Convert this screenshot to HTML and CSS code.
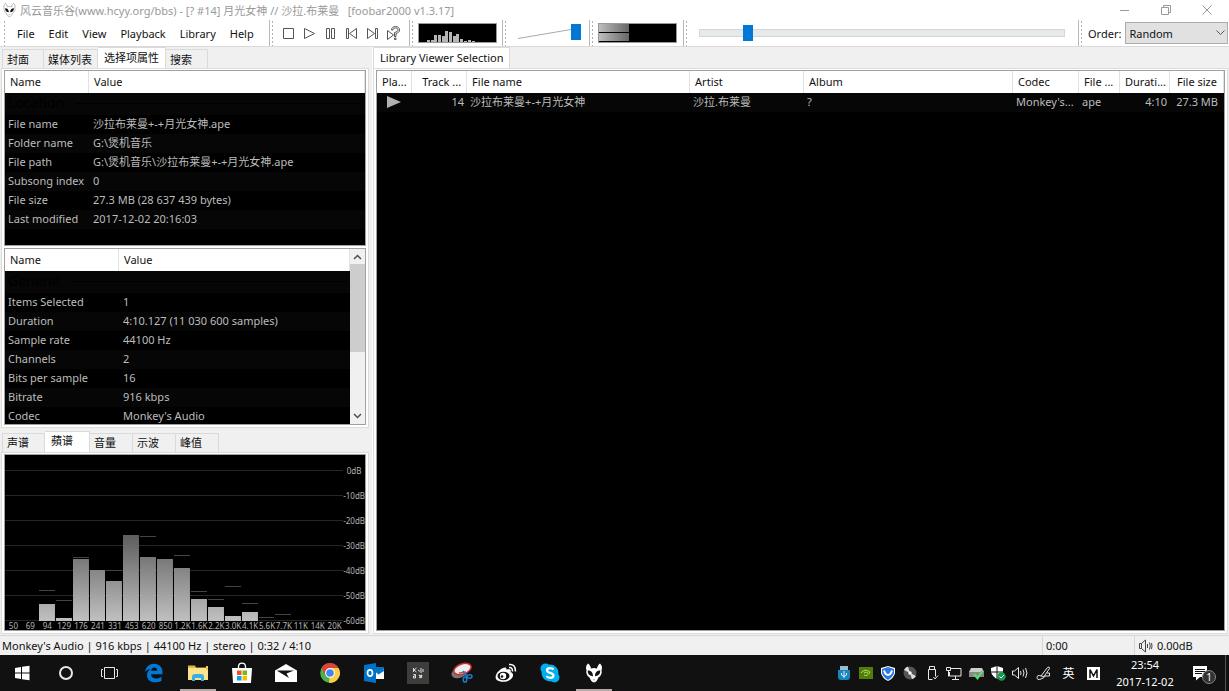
FILE: index.html
```
<!DOCTYPE html>
<html lang="zh-CN">
<head>
<meta charset="utf-8">
<title>foobar2000</title>
<link rel="stylesheet" href="styles.css">
</head>
<body>
<svg class="defs" aria-hidden="true">
  <symbol id="fox" viewBox="0 0 18 20">
    <path d="M3 .5C1 2.500.5 5 1.500 7.200.8 9.500 1.500 12.500 4.500 14.500 5.500 17 7 19.500 9 19.500s3.500-2.500 4.500-5c3-2 3.700-5 3-7.300C17.500 5 17 2.500 15 .5 13.500 1.500 12.500 3 12 5.500 10.500 4.700 7.500 4.700 6 5.500 5.500 3 4.500 1.500 3 .5z" fill="#fff" stroke="var(--edge, none)" stroke-width="1"/>
    <path d="M2.800 7.500C5.800 7.300 8 9.500 8 13.200 5 13.200 2.600 11.200 2.800 7.500zM15.200 7.500C12.200 7.300 10 9.500 10 13.200 13 13.200 15.400 11.200 15.200 7.500zM7.800 16.500h.8v1zM10.200 16.500h-.8v1z" fill="#111"/>
  </symbol>
</svg>

<header class="titlebar">
  <svg class="app-icon" width="13" height="14"><use href="#fox"/></svg>
  <h1 class="window-title">风云音乐谷(www.hcyy.org/bbs) - [? #14] 月光女神 // 沙拉.布莱曼 &nbsp; [foobar2000 v1.3.17]</h1>
  <button class="win-btn" aria-label="Minimize"><svg width="10" height="10"><path d="M0 5.500h9" stroke="#999"/></svg></button>
  <button class="win-btn" aria-label="Restore"><svg width="10" height="10" fill="none" stroke="#999"><path d="M.5 2.500h7v7h-7zM2.500 2.500v-2h7v7h-2"/></svg></button>
  <button class="win-btn" aria-label="Close"><svg width="10" height="10"><path d="M.5.5l9 9M9.500.5l-9 9" stroke="#999"/></svg></button>
</header>

<div class="toolbar">
  <nav class="band band-menu" aria-label="Menu">
    <button class="menu-item">File</button><button class="menu-item">Edit</button><button class="menu-item">View</button><button class="menu-item">Playback</button><button class="menu-item">Library</button><button class="menu-item">Help</button>
  </nav>
  <div class="band band-transport">
    <button class="tool" aria-label="Stop"><svg width="13" height="13"><path d="M1.500 1.500h10v10h-10z"/></svg></button>
    <button class="tool" aria-label="Play"><svg width="13" height="13"><path d="M1.500 1.500v10l10-5z"/></svg></button>
    <button class="tool" aria-label="Pause"><svg width="13" height="13"><path d="M2.500 1.500h3v10h-3zM7.500 1.500h3v10h-3z"/></svg></button>
    <button class="tool" aria-label="Previous"><svg width="13" height="13"><path d="M1.500 1.500h2v10h-2zM11.500 1.500v10l-7-5z"/></svg></button>
    <button class="tool" aria-label="Next"><svg width="13" height="13"><path d="M9.500 1.500h2v10h-2zM1.500 1.500v10l7-5z"/></svg></button>
    <button class="tool" aria-label="Random"><svg width="15" height="15"><path d="M1.500 4.500v9l6-4.500zM8.500 10.500h1.500v-3c2-.5 3.500-1.500 3.500-3.500S12 .5 9.500.5 5.500 2 5.500 4H7c0-1.300 1-2 2.500-2s2.500.8 2.500 2-1.500 2-3.500 2.500zM8.500 12h1.500v1.500H8.500z"/></svg></button>
  </div>
  <div class="band band-spectrum">
    <svg class="meter" width="79" height="20"><path fill="#000" stroke="#999" d="M.5.5h78v19H.5z"/><g fill="#b5b5b5"><path d="M9 17h3v2H9zM13 17h3v2h-3zM16 12h3v7h-3zM20 12h3v7h-3zM24 13h3v6h-3zM27 8h3v11h-3zM31 9h3v10h-3zM35 13h3v6h-3zM38 11h3v8h-3zM42 16h3v3h-3zM46 18h3v1h-3zM50 17h3v2h-3zM54 18h3v1h-3z"/></g></svg>
  </div>
  <div class="band band-volume">
    <div class="volume">
      <svg class="volume-ramp" viewBox="0 0 62 18" width="62" height="18"><path d="M0 14.500L53 5.500" stroke="#aaa" fill="none"/></svg>
      <input class="slider slider-volume" type="range" aria-label="Volume" min="0" max="100" value="100">
    </div>
  </div>
  <div class="band band-peak">
    <svg class="meter" width="79" height="20"><defs><linearGradient id="pk"><stop offset="0" stop-color="#bdbdbd"/><stop offset="1" stop-color="#666"/></linearGradient></defs><path fill="#000" stroke="#999" d="M.5.5h78v19H.5z"/><path fill="url(#pk)" d="M1 1h30v8H1zM1 10h30v8H1z"/></svg>
  </div>
  <div class="band band-seek">
    <input class="slider slider-seek" type="range" aria-label="Seek" min="0" max="1000" value="121">
  </div>
  <div class="band band-order">
    <label for="order">Order:</label>
    <div class="order-box">
      <select id="order" class="order-select"><option>Random</option></select>
      <svg class="order-arrow" width="9" height="6"><path d="M.5.5l4 4 4-4" fill="none" stroke="#555"/></svg>
    </div>
  </div>
</div>

<main class="workspace">
  <section class="left">
    <div class="tabs" role="tablist">
      <button class="tab" role="tab">封面</button><button class="tab" role="tab">媒体列表</button><button class="tab active" role="tab" aria-selected="true">选择项属性</button><button class="tab" role="tab">搜索</button>
    </div>
    <div class="frame frame-props">
      <div class="list">
        <table class="grid props">
          <colgroup><col class="c-key"><col></colgroup>
          <thead><tr><th>Name</th><th>Value</th></tr></thead>
          <tbody>
            <tr class="group"><td colspan="2"><div class="group-head">Location</div></td></tr>
            <tr><td>File name</td><td>沙拉布莱曼+-+月光女神.ape</td></tr>
            <tr><td>Folder name</td><td>G:\煲机音乐</td></tr>
            <tr><td>File path</td><td>G:\煲机音乐\沙拉布莱曼+-+月光女神.ape</td></tr>
            <tr><td>Subsong index</td><td>0</td></tr>
            <tr><td>File size</td><td>27.3 MB (28 637 439 bytes)</td></tr>
            <tr><td>Last modified</td><td>2017-12-02 20:16:03</td></tr>
          </tbody>
        </table>
      </div>
      <div class="list">
        <table class="grid props">
          <colgroup><col class="c-key-wide"><col></colgroup>
          <thead><tr><th>Name</th><th>Value</th></tr></thead>
          <tbody>
            <tr class="group"><td colspan="2"><div class="group-head">General</div></td></tr>
            <tr><td>Items Selected</td><td>1</td></tr>
            <tr><td>Duration</td><td>4:10.127 (11 030 600 samples)</td></tr>
            <tr><td>Sample rate</td><td>44100 Hz</td></tr>
            <tr><td>Channels</td><td>2</td></tr>
            <tr><td>Bits per sample</td><td>16</td></tr>
            <tr><td>Bitrate</td><td>916 kbps</td></tr>
            <tr><td>Codec</td><td>Monkey's Audio</td></tr>
          </tbody>
        </table>
        <div class="scrollbar">
          <button class="scroll-btn" aria-label="Scroll up"><svg width="9" height="6"><path d="M1 5l3.500-3.500L8 5" fill="none" stroke="#505050" stroke-width="1.500"/></svg></button>
          <div class="scroll-track"><div class="scroll-thumb"></div></div>
          <button class="scroll-btn" aria-label="Scroll down"><svg width="9" height="6"><path d="M1 1l3.500 3.500L8 1" fill="none" stroke="#505050" stroke-width="1.500"/></svg></button>
        </div>
      </div>
    </div>
    <div class="tabs tabs-lower" role="tablist">
      <button class="tab" role="tab">声谱</button><button class="tab active" role="tab" aria-selected="true">蘋谱</button><button class="tab" role="tab">音量</button><button class="tab" role="tab">示波</button><button class="tab" role="tab">峰值</button>
    </div>
    <div class="frame frame-scope">
      <div class="scope">
        <div class="plot">
          <div class="band-col"></div>
          <div class="band-col"></div>
          <div class="band-col"><i class="peak" style="bottom:30px"></i><i class="bar" style="height:17px"></i></div>
          <div class="band-col"><i class="peak" style="bottom:20px"></i><i class="bar" style="height:3px"></i></div>
          <div class="band-col"><i class="peak" style="bottom:63px"></i><i class="bar" style="height:62px"></i></div>
          <div class="band-col"><i class="bar" style="height:51px"></i></div>
          <div class="band-col"><i class="peak" style="bottom:50px"></i><i class="bar" style="height:40px"></i></div>
          <div class="band-col"><i class="bar" style="height:86px"></i></div>
          <div class="band-col"><i class="peak" style="bottom:84px"></i><i class="bar" style="height:64px"></i></div>
          <div class="band-col"><i class="bar" style="height:62px"></i></div>
          <div class="band-col"><i class="peak" style="bottom:65px"></i><i class="bar" style="height:53px"></i></div>
          <div class="band-col"><i class="peak" style="bottom:29px"></i><i class="bar" style="height:22px"></i></div>
          <div class="band-col"><i class="peak" style="bottom:21px"></i><i class="bar" style="height:14px"></i></div>
          <div class="band-col"><i class="peak" style="bottom:34px"></i><i class="bar" style="height:5px"></i></div>
          <div class="band-col"><i class="peak" style="bottom:17px"></i><i class="bar" style="height:9px"></i></div>
          <div class="band-col"><i class="peak" style="bottom:3px"></i></div>
          <div class="band-col"><i class="peak" style="bottom:6px"></i></div>
          <div class="band-col"></div>
          <div class="band-col"></div>
          <div class="band-col"></div>
        </div>
        <div class="db-axis"><span>0dB</span><span>-10dB</span><span>-20dB</span><span>-30dB</span><span>-40dB</span><span>-50dB</span><span>-60dB</span></div>
        <div class="hz-axis"><span>50</span><span>69</span><span>94</span><span>129</span><span>176</span><span>241</span><span>331</span><span>453</span><span>620</span><span>850</span><span>1.2K</span><span>1.6K</span><span>2.2K</span><span>3.0K</span><span>4.1K</span><span>5.6K</span><span>7.7K</span><span>11K</span><span>14K</span><span>20K</span></div>
      </div>
    </div>
  </section>

  <section class="right">
    <div class="tabs" role="tablist">
      <button class="tab active" role="tab" aria-selected="true">Library Viewer Selection</button>
    </div>
    <div class="frame">
      <div class="list">
        <table class="grid tracks">
          <colgroup><col class="c-play"><col class="c-track"><col class="c-file"><col class="c-artist"><col><col class="c-codec"><col class="c-ext"><col class="c-dur"><col class="c-size"></colgroup>
          <thead><tr><th>Pla...</th><th class="num">Track ...</th><th>File name</th><th>Artist</th><th>Album</th><th>Codec</th><th>File ...</th><th class="num">Durati...</th><th class="num">File size</th></tr></thead>
          <tbody><tr><td class="playing"><svg width="14" height="12"><path d="M0 0v12l14-6z" fill="#b0b0b0"/></svg></td><td class="num">14</td><td>沙拉布莱曼+-+月光女神</td><td>沙拉.布莱曼</td><td>?</td><td>Monkey's...</td><td>ape</td><td class="num">4:10</td><td class="num">27.3 MB</td></tr></tbody>
        </table>
      </div>
    </div>
  </section>
</main>

<footer class="status">
  <span class="status-main">Monkey's Audio | 916 kbps | 44100 Hz | stereo | 0:32 / 4:10</span>
  <span class="status-cell">0:00</span>
  <span class="status-cell"><svg width="15" height="14" fill="none" stroke="#444"><path d="M1.500 4.500h2v5h-2zM3.500 4.500L7.500 1v12L3.500 9.500M9.500 5v4M11.500 3.500q1.500 3.500 0 7M13.500 4q1 3 0 6"/></svg>0.00dB</span>
</footer>

<div class="taskbar">
  <button class="task" aria-label="Start"><svg width="16" height="16"><path fill="#fff" d="M1 3l6-1v5.500H1zM8 1.800L15.500.7v6.800H8zM1 8.500h6V14l-6-1zM8 8.500h7.500v6.800L8 14.200z"/></svg></button>
  <button class="task" aria-label="Cortana"><svg width="16" height="16"><circle cx="8" cy="8" r="6" fill="none" stroke="#e8e8e8" stroke-width="2"/></svg></button>
  <button class="task" aria-label="Task view"><svg width="20" height="16" fill="none" stroke="#e8e8e8"><path d="M4.500 2.500h10v11h-10zM3 4.500H1.500v7H3M16 4.500h1.500v7H16"/></svg></button>
  <button class="task" aria-label="Edge"><svg width="20" height="20"><path fill="#0078d7" d="M1 9C2 3.500 5.500.8 10.200.8c5.300 0 8.300 3.700 8.300 8.400v2H7c.2 3 2.500 4.300 5 4.300 2.200 0 3.900-.6 5.500-1.500v3.800c-1.800 1-3.800 1.500-6.300 1.500C6 19.300 3 16 3 11.900c0-2.700 1.500-4.900 4-6C4.500 5.900 2.500 7 1 9zm6.200-1.200h6c0-2.100-1-3.300-2.900-3.300-1.800 0-2.800 1.400-3.100 3.300z"/></svg></button>
  <button class="task running" aria-label="File Explorer"><svg width="20" height="18"><path fill="#e5b93d" d="M0 1.500h7l1 2h10V8H0z"/><path fill="#fde28c" d="M0 4h20v12H0z"/><path fill="#f6c94c" d="M18 2h2v4h-2z"/><path fill="#35aee8" d="M4 17v-4q0-3 3-3h6q3 0 3 3v4h-3v-3H7v3z"/></svg></button>
  <button class="task" aria-label="Store"><svg width="22" height="22"><path fill="none" stroke="#fff" stroke-width="1.300" d="M7.500 6V4Q8 1.200 11 1.200T14.500 4v2"/><path fill="#fff" d="M1 6h20l-1 15H2z"/><path fill="#f25022" d="M6 8.500h4.500V13H6z"/><path fill="#7fba00" d="M11.500 8.500H16V13h-4.500z"/><path fill="#00a4ef" d="M6 14h4.500v4.500H6z"/><path fill="#ffb900" d="M11.500 14H16v4.500h-4.500z"/></svg></button>
  <button class="task" aria-label="Mail"><svg width="22" height="18"><path fill="#fff" d="M0 6.500L11 0l11 6.500V18H0z"/><path fill="#111" d="M3 6.500h16l-7.500 3 2.500 4.500L2 6.800z"/></svg></button>
  <button class="task" aria-label="Chrome"><svg width="20" height="20"><circle cx="10" cy="10" r="9.800" fill="#4caf50"/><path fill="#ffcd40" d="M10 10V5h8.500a9.800 9.800 0 0 1-9.500 14.800z"/><path fill="#db4437" d="M1.500 5A9.800 9.800 0 0 1 18.500 5H10l-4.500 7.500z"/><circle cx="10" cy="10" r="4.900" fill="#fff"/><circle cx="10" cy="10" r="3.800" fill="#4285f4"/></svg></button>
  <button class="task" aria-label="Outlook"><svg width="20" height="20"><path fill="#fff" d="M11 5h9v11h-9z"/><path fill="#0072c6" d="M0 2l12-2v20L0 18zM11 4h9v2l-6 4.500-3-2z"/><path d="M12 8l2.500 2.500L20 7" stroke="#0072c6" stroke-width="1.500" fill="none"/><ellipse cx="6" cy="10" rx="2.500" ry="3.200" fill="none" stroke="#fff" stroke-width="1.700"/></svg></button>
  <button class="task" aria-label="Characters"><svg width="22" height="22"><path fill="#3f3d3c" d="M0 0h22v22H0z"/><g fill="none" stroke="#ddd"><path d="M6.500 6v4M9.500 6L7 8l2.500 2M6.500 12.500h2V16h-2v-2h2M11 8l2 1.500M14 6v5M16 7v3"/><path d="M12 13l3 2.500M15 13l-2.500 3" stroke-width="1.500"/></g></svg></button>
  <button class="task" aria-label="Snipping Tool"><svg width="22" height="22"><ellipse cx="9" cy="10" rx="9" ry="5.500" transform="rotate(-25 9 10)" fill="#777"/><ellipse cx="11.500" cy="7" rx="9" ry="5" transform="rotate(-20 11.500 7)" fill="#eee" stroke="#d42b35" stroke-width="1.500"/><path d="M8 11l7-1" stroke="#b55" stroke-width="1.500"/><path d="M12 9l4 6" stroke="#187dcd" stroke-width="1.500"/><ellipse cx="14" cy="17.500" rx="1.800" ry="2.600" fill="none" stroke="#187dcd" stroke-width="1.500"/><ellipse cx="18.500" cy="14.500" rx="2.500" ry="1.700" fill="none" stroke="#187dcd" stroke-width="1.500"/></svg></button>
  <button class="task" aria-label="Weibo"><svg width="22" height="20"><path fill="#fff" d="M8 5c2-1 3.800-.7 3.500 1.700C15 5.500 16.500 7 15.500 9c3 1 3.300 4 1.300 6.300-3.300 4-11.300 4.600-15 1.700C-1.500 14 2.500 7.500 8 5z"/><ellipse cx="8.500" cy="13" rx="6" ry="4.200" fill="#111"/><circle cx="8" cy="13" r="3.200" fill="#fff"/><circle cx="7" cy="13.500" r="1.300" fill="#111"/><path d="M14 1.500q6.500-1 6.500 7M14 4.500q3.500-.5 3.500 4" fill="none" stroke="#fff" stroke-width="1.500"/></svg></button>
  <button class="task" aria-label="Skype"><svg width="20" height="20"><g fill="#00aff0"><circle cx="10" cy="10" r="8.500"/><circle cx="5.500" cy="5.500" r="5"/><circle cx="14.500" cy="14.500" r="5"/></g><path d="M13.500 6.500C12 4.500 7 4.700 7 7.500c0 3 6.500 1.800 6.500 5 0 3-5.500 3-7 .5" fill="none" stroke="#fff" stroke-width="2.200"/></svg></button>
  <button class="task running" aria-label="foobar2000"><svg width="18" height="20"><use href="#fox"/></svg></button>

  <div class="tray">
    <button class="tray-btn" aria-label="USB"><svg width="14" height="16"><path fill="#9bbccd" d="M3 1h8v4H3z"/><path fill="#1687bd" d="M1 5h12v7q0 3-3 3H4q-3 0-3-3z"/><path d="M7 13V6M4.500 8v2L7 11.500 9.500 10V8" stroke="#d8f1ff" fill="none"/></svg></button>
    <button class="tray-btn" aria-label="NVIDIA"><svg width="14" height="12"><path fill="#527d0b" d="M0 0h14v12H0z"/><path d="M2 6q4-5 9-1Q8 10 5 8M5 6q2-2 4 0" fill="none" stroke="#b4dc63"/></svg></button>
    <button class="tray-btn" aria-label="Security"><svg width="14" height="15"><path fill="#fff" d="M7 0l7 2v5q-1 5-7 8-6-3-7-8V2z"/><path fill="#2c78e0" d="M7 1l6 2v4q-1 4-6 7-5-3-6-7V3z"/><path d="M3 4.500Q4.500 9 7 9t4-4.500" fill="none" stroke="#fff" stroke-width="2"/></svg></button>
    <button class="tray-btn" aria-label="Disc"><svg width="14" height="14"><circle cx="7" cy="7" r="6.500" fill="#555"/><path d="M7 7L1 4a6.500 6.500 0 0 1 4-3.500zM7 7l6 3a6.500 6.500 0 0 1-4 3.300z" fill="#ddd"/><circle cx="7" cy="7" r="1.700" fill="#fff"/></svg></button>
    <button class="tray-btn" aria-label="Safely remove"><svg width="13" height="16" fill="none" stroke="#e8e8e8"><path d="M3.500 4.500v-3h5v3M2.500 4.500h7v7M2.500 4.500v10h4M7.500 12l1.500 2 3-3.500"/></svg></button>
    <button class="tray-btn" aria-label="Network"><svg width="16" height="14" fill="none" stroke="#e8e8e8"><path d="M5 2.500h10v7.500H3.500V6M.5 1.500h4v3h-4zM2.500 4.500v6M9.500 10v3M6 13.500h7"/></svg></button>
    <button class="tray-btn" aria-label="Drive"><svg width="15" height="14"><path fill="#ccc" d="M2 2h11l2 4v4H0V6z"/><path fill="#888" d="M0 6h15v5H0z"/><path d="M5 8l3.500 4L13.500 5" fill="none" stroke="#5fd86b" stroke-width="2.500"/></svg></button>
    <button class="tray-btn" aria-label="Defender"><svg width="15" height="15"><path fill="#fff" d="M6 0l6 2v4q-1 4-6 7-5-3-6-7V2z"/><path d="M6 0v13M0 6h12" stroke="#111"/><circle cx="10.500" cy="10.500" r="4.200" fill="#159a50"/><path d="M8.500 10.500l1.500 1.500 3-3" fill="none" stroke="#fff"/></svg></button>
    <button class="tray-btn" aria-label="Volume"><svg width="16" height="14" fill="none" stroke="#e8e8e8"><path d="M.5 5h2L6.500 1.500v11L2.500 9H.5zM8.500 5q1 2 0 4M11 3.500q2 3.500 0 7M13.500 2q3 5 0 10"/></svg></button>
    <button class="tray-btn wide" aria-label="Ink"><svg width="16" height="16" fill="none" stroke="#e8e8e8"><path d="M5 11L11.500 2.500q2-1.500 2 1L8 11.500zM5 11Q1 9.500 1 12.500t4 1.500 4-3h4.500v-3H11"/></svg></button>
    <button class="tray-btn wide">英</button>
    <button class="tray-btn wide" aria-label="Input mode"><svg width="13" height="13"><path fill="#fff" d="M0 0h13v13H0z"/><path d="M3 11V2.500L6.500 9 10 2.500V11" fill="none" stroke="#111" stroke-width="1.500"/></svg></button>
    <button class="clock"><span>23:54</span><span>2017-12-02</span></button>
    <button class="notify" aria-label="Notifications"><svg width="16" height="16"><path fill="#fff" d="M1 1h14v11H8l-4 3.500V12H1z"/><path d="M3 4.500h10M3 6.500h10M3 8.500h7" stroke="#111"/></svg><span class="badge">1</span></button>
    <button class="show-desktop" aria-label="Show desktop"></button>
  </div>
</div>
</body>
</html>
```
FILE: styles.css
```
* { box-sizing: border-box; }

body {
  margin: 0;
  height: 100vh;
  display: flex;
  flex-direction: column;
  overflow: hidden;
  background: #f0f0f0;
  color: #111;
  font-family: "Noto Sans", "Noto Sans CJK SC", sans-serif;
  font-size: 11px;
  line-height: 15px;
}

button, select, input { font: inherit; color: inherit; margin: 0; }
button { border: 0; background: none; padding: 0; }
svg { flex: none; display: block; }
.defs { position: absolute; width: 0; height: 0; }

/* Title bar */
.titlebar {
  flex: none;
  height: 20px;
  display: flex;
  align-items: center;
  background: #fff;
  padding: 0 2px 0 3px;
}
.app-icon { --edge: #999; }
.window-title {
  flex: 1;
  margin: 0 0 0 4px;
  font-size: 11px;
  font-weight: 400;
  color: #999;
  white-space: nowrap;
}
.win-btn {
  width: 41px;
  height: 20px;
  display: flex;
  align-items: center;
  justify-content: center;
}

/* Toolbar */
.toolbar {
  flex: none;
  height: 27px;
  display: flex;
  background: #fff;
  border-bottom: 1px solid #dadada;
  padding-left: 2px;
}
.band {
  display: flex;
  align-items: center;
  border-right: 1px solid #b8b8b8;
}
.band::before {
  content: "";
  align-self: stretch;
  width: 1px;
  margin: 1px 0 0 2px;
  background: repeating-linear-gradient(#b0b0b0 0 2px, transparent 2px 4px);
}
.band-menu { flex: 0 0 268px; }
.band-menu::before { margin-right: 5px; }
.menu-item { padding: 0 7px; }
.band-transport { flex: 0 0 140px; }
.band-transport::before { margin-right: 5px; }
.tool {
  width: 21px;
  display: flex;
  align-items: center;
  justify-content: center;
}
.tool svg { fill: #fff; stroke: #555; }
.band-spectrum { flex: 0 0 93px; }
.band-volume { flex: 0 0 87px; }
.band-peak { flex: 0 0 94px; }
.meter { margin-left: 5px; }
.volume { display: grid; margin-left: 12px; }
.volume > * { grid-area: 1 / 1; }
.band-seek { flex: 1; padding-right: 13px; }
.band-seek .slider { flex: 1; margin-left: 12px; min-width: 0; }
.band-order { flex: 0 0 150px; border-right: 0; }
.band-order label { padding: 0 4px 0 6px; }

.slider {
  appearance: none;
  background: transparent;
  height: 18px;
}
.slider-volume { width: 63px; }
.slider::-webkit-slider-runnable-track { height: 8px; }
.slider-seek::-webkit-slider-runnable-track {
  background: #e7eaea;
  border: 1px solid #d6d6d6;
}
.slider::-webkit-slider-thumb {
  appearance: none;
  width: 10px;
  height: 16px;
  margin-top: -5px;
  background: #0078d7;
}

.order-box { flex: 1; display: grid; align-items: center; padding-right: 1px; }
.order-select {
  grid-area: 1 / 1;
  appearance: none;
  height: 22px;
  padding: 0 3px;
  background: #e1e1e1;
  border: 1px solid #adadad;
  border-radius: 0;
}
.order-arrow { grid-area: 1 / 1; justify-self: end; margin-right: 3px; pointer-events: none; }

/* Workspace */
.workspace {
  flex: 1;
  min-height: 0;
  display: flex;
  gap: 3px;
  padding: 0 1px 1px 1px;
}
.left {
  flex: 0 0 30%;
  min-width: 0;
  display: flex;
  flex-direction: column;
}
.right {
  flex: 1;
  min-width: 0;
  display: flex;
  flex-direction: column;
  border-left: 1px solid #fff;
}

.tabs {
  flex: none;
  height: 21px;
  display: flex;
  align-items: flex-end;
}
.left .tabs { padding-left: 1px; }
.left .tabs-lower { height: 24px; }
.tab {
  height: 19px;
  min-width: 42px;
  padding: 0 5px 0 4px;
  text-align: left;
  border: 1px solid #dadada;
  border-width: 1px 1px 0 0;
}
.tab:first-child { border-left-width: 1px; }
.tab.active {
  height: 21px;
  padding: 0 6px 2px;
  background: #fff;
}
.tabs-lower .tab { min-width: 43px; }
.tabs-lower .tab.active { min-width: 45px; }

.frame {
  flex: 1 1 0;
  min-height: 0;
  display: flex;
  flex-direction: column;
  gap: 2px;
  padding: 1px 2px 2px;
  background: #fff;
  border: 1px solid #dcdcdc;
}
.frame-props { flex-grow: 2; }

.list {
  flex: 1 1 0;
  min-height: 0;
  display: flex;
  align-items: flex-start;
  background: #000;
  border: 1px solid #a0a0a0;
  overflow: hidden;
}

.grid {
  flex: 1;
  width: 100%;
  min-width: 0;
  table-layout: fixed;
  border-collapse: separate;
  border-spacing: 0;
  color: #bcbcbc;
}
.grid th {
  height: 22px;
  padding: 0 5px 2px;
  background: #fff;
  border-right: 1px solid #e2e2e2;
  color: #111;
  font-weight: 400;
  text-align: left;
  white-space: nowrap;
}
.grid td {
  height: 19px;
  padding: 0 3px 2px;
  white-space: nowrap;
}
.grid tbody tr:nth-child(odd) { background: #060606; }
.grid .num { text-align: right; }
.group td { height: 22px; }
.group-head {
  display: flex;
  align-items: center;
  gap: 12px;
  font-size: 14px;
  line-height: 20px;
  color: #000;
}
.group-head::after { content: ""; flex: 1; height: 1px; background: #000; }
.props td + td { padding-left: 4px; }
.c-key { width: 84px; }
.c-key-wide { width: 114px; }
.c-play { width: 35px; }
.c-track { width: 55px; }
.c-file { width: 223px; }
.c-artist { width: 114px; }
.c-codec { width: 66px; }
.c-ext { width: 41px; }
.c-dur { width: 50px; }
.c-size { width: 54px; }
.tracks td.playing { padding-left: 10px; }
.tracks .num:last-child { padding-right: 6px; }

.scrollbar {
  flex: 0 0 15px;
  align-self: stretch;
  display: flex;
  flex-direction: column;
  background: #f0f0f0;
}
.scroll-btn {
  height: 15px;
  display: flex;
  align-items: center;
  justify-content: center;
}
.scroll-track { flex: 1; }
.scroll-thumb { height: 61%; background: #cdcdcd; }

/* Spectrum */
.scope {
  flex: 1;
  display: grid;
  grid-template-columns: 1fr 22px;
  grid-template-rows: 1fr 9px;
  background: #000;
  border: 1px solid #a0a0a0;
  color: #b4b4b4;
  font-size: 8px;
  line-height: 10px;
  overflow: hidden;
}
.plot {
  align-self: end;
  height: 151px;
  display: grid;
  grid-template-columns: repeat(20, 1fr);
  background: repeating-linear-gradient(#262626 0 1px, transparent 1px 25px);
}
.band-col { position: relative; display: flex; align-items: flex-end; padding-right: 1px; }
.bar {
  flex: 1;
  background: linear-gradient(#141414, #c0c0c0) bottom / 100% 150px;
}
.peak { position: absolute; left: 0; right: 1px; height: 1px; background: #444; }
.db-axis {
  align-self: end;
  display: flex;
  flex-direction: column;
  gap: 15px;
  text-align: center;
  margin-bottom: -5px;
}
.hz-axis {
  display: grid;
  grid-template-columns: repeat(20, minmax(0, 1fr));
  text-align: center;
}

/* Status bar */
.status {
  flex: none;
  height: 20px;
  display: flex;
  align-items: center;
  border-top: 1px solid #d7d7d7;
}
.status-main { flex: 1; padding-left: 2px; }
.status-cell {
  flex: 0 0 92px;
  display: flex;
  align-items: center;
  align-self: stretch;
  gap: 4px;
  padding-left: 3px;
  border-left: 1px solid #d7d7d7;
}
.status-cell:last-child { flex-basis: 95px; }

/* Taskbar */
.taskbar {
  flex: none;
  height: 36px;
  display: flex;
  background: #111;
  color: #fff;
}
.task {
  flex: 0 0 44px;
  display: flex;
  align-items: center;
  justify-content: center;
}
.task.running {
  background: linear-gradient(#b3a9a9, #b3a9a9) center bottom / 36px 2px no-repeat;
}
.tray { margin-left: auto; display: flex; align-items: center; }
.tray-btn {
  width: 22px;
  display: flex;
  align-items: center;
  justify-content: center;
  font-size: 12px;
}
.tray-btn.wide { width: 25px; }
.clock {
  width: 78px;
  display: flex;
  flex-direction: column;
  align-items: center;
  line-height: 17px;
}
.notify {
  position: relative;
  width: 41px;
  padding-right: 9px;
  display: flex;
  justify-content: center;
}
.badge {
  position: absolute;
  left: 18px;
  top: 5px;
  width: 14px;
  height: 14px;
  border: 1px solid #888;
  border-radius: 50%;
  background: #333;
  font-size: 10px;
  line-height: 12px;
}
.show-desktop { width: 4px; height: 36px; border-left: 1px solid #555; }
```
